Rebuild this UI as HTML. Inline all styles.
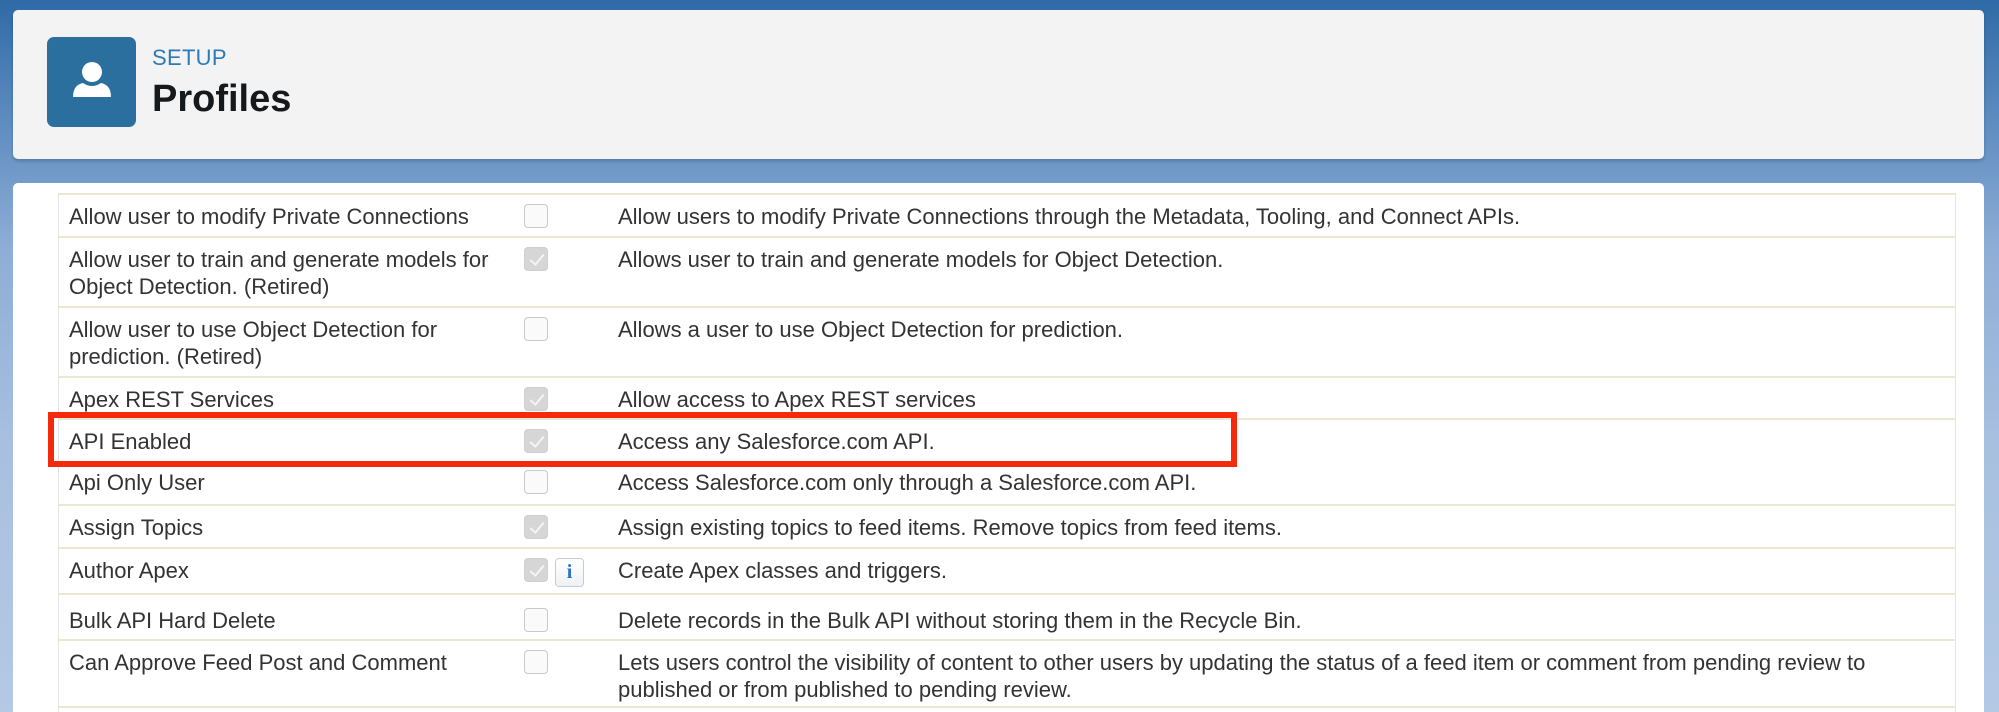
<!DOCTYPE html>
<html><head><meta charset="utf-8"><style>
*{margin:0;padding:0;box-sizing:border-box}
html,body{width:1999px;height:712px;overflow:hidden;background:#a8c0e0}
body{font-family:"Liberation Sans",Arial,sans-serif;position:relative}
.bg{position:absolute;left:0;top:0;width:1999px;height:712px;background:linear-gradient(180deg,#2f6aa6 0px,#5d8cc0 120px,#8eaed6 250px,#a8c0e0 450px,#b3c9e4 712px)}
.hdr{position:absolute;left:13px;top:10px;width:1971px;height:149px;background:#f3f3f3;border-radius:5px;box-shadow:0 2px 3px rgba(0,0,0,.2)}
.ico{position:absolute;left:34px;top:27px;width:89px;height:90px;background:#2b6f9e;border-radius:7px}
.setup{position:absolute;left:139px;top:35px;font-size:22px;color:#2d7ab8;letter-spacing:.3px}
.title{position:absolute;left:139px;top:68px;font-size:38px;font-weight:bold;color:#16191c}
.card{position:absolute;left:13px;top:183px;width:1971px;height:540px;background:#fff;border-radius:5px}
.tbl{position:absolute;left:58px;top:193px;width:1898px;height:530px;border-left:1px solid #e4e4e4;border-right:1px solid #e4e4e4}
.row{position:absolute;left:58px;width:1898px;border-top:2px solid #ebe8d2}
.lab{position:absolute;left:11px;top:8px;width:440px;font-size:22px;line-height:27px;color:#333}
.desc{position:absolute;left:560px;top:8px;width:1320px;font-size:22px;line-height:27px;color:#333}
.cb{position:absolute;left:466px;top:9px;width:24px;height:24px;border:1px solid #c9c9c9;border-radius:4px;background:#fafafa}
.cb.on{background:#d6d6d6;border-color:#cfcfcf}
.cb.on::after{content:"";position:absolute;left:8px;top:3px;width:6px;height:12px;border-right:2px solid #f4f4f4;border-bottom:2px solid #f4f4f4;transform:rotate(40deg)}
.info{position:absolute;left:497px;top:9px;width:29px;height:29px;border:1px solid #c8ccd2;border-radius:4px;background:linear-gradient(#fff,#eef1f5);color:#2a73c9;font-family:"Liberation Serif",serif;font-weight:bold;font-size:20px;text-align:center;line-height:27px}
.red{position:absolute;left:48px;top:412px;width:1189px;height:55px;border:6px solid #f52a0c}
</style></head><body>
<div class="bg"></div>
<div class="hdr">
<div class="ico"><svg width="89" height="90" viewBox="0 0 89 90"><circle cx="45" cy="35" r="10" fill="#fff"/><path d="M26 60 Q26 48 36 46 Q45 52 54 46 Q64 48 64 60 Z" fill="#fff"/></svg></div>
<div class="setup">SETUP</div>
<div class="title">Profiles</div>
</div>
<div class="card"></div>
<div class="tbl"></div>
<div class="row" style="top:193px;height:43px"><div class="lab">Allow user to modify Private Connections</div><div class="cb"></div><div class="desc">Allow users to modify Private Connections through the Metadata, Tooling, and Connect APIs.</div></div>
<div class="row" style="top:236px;height:70px"><div class="lab">Allow user to train and generate models for Object Detection. (Retired)</div><div class="cb on"></div><div class="desc">Allows user to train and generate models for Object Detection.</div></div>
<div class="row" style="top:306px;height:70px"><div class="lab">Allow user to use Object Detection for prediction. (Retired)</div><div class="cb"></div><div class="desc">Allows a user to use Object Detection for prediction.</div></div>
<div class="row" style="top:376px;height:42px"><div class="lab">Apex REST Services</div><div class="cb on"></div><div class="desc">Allow access to Apex REST services</div></div>
<div class="row" style="top:418px;height:49px"><div class="lab">API Enabled</div><div class="cb on"></div><div class="desc">Access any Salesforce.com API.</div></div>
<div class="row" style="top:467px;height:37px;border-top:0"><div class="lab" style="top:2px">Api Only User</div><div class="cb" style="top:3px"></div><div class="desc" style="top:2px">Access Salesforce.com only through a Salesforce.com API.</div></div>
<div class="row" style="top:504px;height:43px"><div class="lab">Assign Topics</div><div class="cb on"></div><div class="desc">Assign existing topics to feed items. Remove topics from feed items.</div></div>
<div class="row" style="top:547px;height:46px"><div class="lab">Author Apex</div><div class="cb on"></div><div class="info">i</div><div class="desc">Create Apex classes and triggers.</div></div>
<div class="row" style="top:593px;height:46px"><div class="lab" style="top:12px">Bulk API Hard Delete</div><div class="cb" style="top:13px"></div><div class="desc" style="top:12px">Delete records in the Bulk API without storing them in the Recycle Bin.</div></div>
<div class="row" style="top:639px;height:69px;border-bottom:2px solid #ebe8d2"><div class="lab">Can Approve Feed Post and Comment</div><div class="cb"></div><div class="desc">Lets users control the visibility of content to other users by updating the status of a feed item or comment from pending review to published or from published to pending review.</div></div>
<div class="red"></div>
</body></html>
